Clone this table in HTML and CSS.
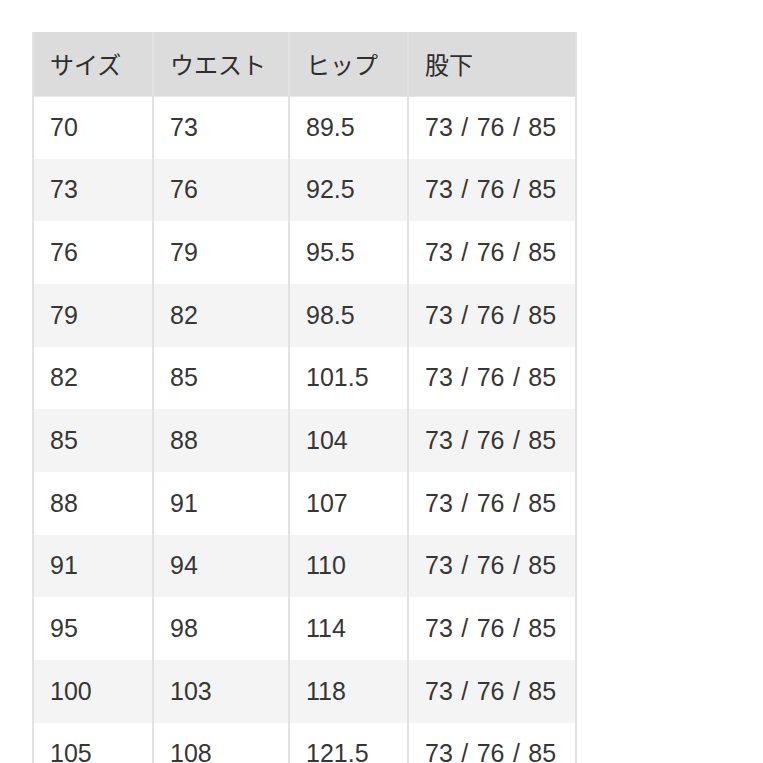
FILE: index.html
```html
<!DOCTYPE html>
<html lang="ja">
<head>
<meta charset="utf-8">
<link rel="stylesheet" href="styles.css">
</head>
<body>
<table class="size-table">
  <colgroup>
    <col class="c1"><col class="c2"><col class="c3"><col class="c4">
  </colgroup>
  <thead>
    <tr><th>サイズ</th><th>ウエスト</th><th>ヒップ</th><th>股下</th></tr>
  </thead>
  <tbody>
    <tr><td>70</td><td>73</td><td>89.5</td><td>73 / 76 / 85</td></tr>
    <tr><td>73</td><td>76</td><td>92.5</td><td>73 / 76 / 85</td></tr>
    <tr><td>76</td><td>79</td><td>95.5</td><td>73 / 76 / 85</td></tr>
    <tr><td>79</td><td>82</td><td>98.5</td><td>73 / 76 / 85</td></tr>
    <tr><td>82</td><td>85</td><td>101.5</td><td>73 / 76 / 85</td></tr>
    <tr><td>85</td><td>88</td><td>104</td><td>73 / 76 / 85</td></tr>
    <tr><td>88</td><td>91</td><td>107</td><td>73 / 76 / 85</td></tr>
    <tr><td>91</td><td>94</td><td>110</td><td>73 / 76 / 85</td></tr>
    <tr><td>95</td><td>98</td><td>114</td><td>73 / 76 / 85</td></tr>
    <tr><td>100</td><td>103</td><td>118</td><td>73 / 76 / 85</td></tr>
    <tr><td>105</td><td>108</td><td>121.5</td><td>73 / 76 / 85</td></tr>
  </tbody>
</table>
</body>
</html>
```
FILE: styles.css
```css
html, body {
  margin: 0;
  padding: 0;
  background: #ffffff;
  overflow: hidden;
}
body {
  padding: 32px 0 0 32px;
  font-family: "Liberation Sans", "Noto Sans CJK JP", sans-serif;
  color: #363636;
}
.size-table {
  border-collapse: collapse;
  table-layout: fixed;
  width: 543px;
}
.c1 { width: 120px; }
.c2 { width: 136px; }
.c3 { width: 119px; }
.c4 { width: 168px; }
.size-table th,
.size-table td {
  text-align: left;
  padding: 0 0 0 16px;
  border-left: 2px solid #e2e2e2;
  border-right: 2px solid #e2e2e2;
  white-space: nowrap;
  box-sizing: border-box;
}
.size-table th {
  height: 64px;
  background: #dcdcdc;
  font-family: "Noto Sans CJK JP", sans-serif;
  font-weight: 400;
  font-size: 24px;
  color: #2e2e2e;
  border-bottom: 1px solid #e8e8e8;
}
.size-table td {
  height: 62.67px;
  font-size: 25px;
  word-spacing: 1.5px;
}
.size-table tbody tr:nth-child(even) td {
  background: #f4f4f4;
}
```
